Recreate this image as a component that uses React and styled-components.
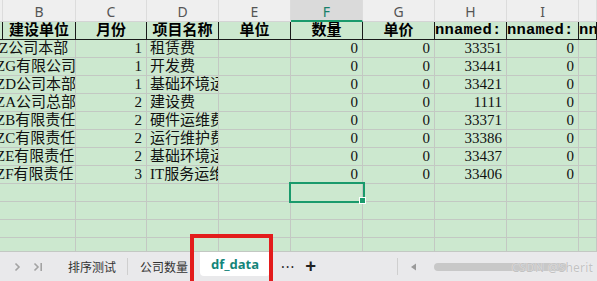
import React from "react";
import styled, { createGlobalStyle, css } from "styled-components";

const GlobalStyle = createGlobalStyle`
  html, body {
    margin: 0;
    padding: 0;
    background: #cce8cf;
  }
  #root {
    width: 597px;
    height: 281px;
    overflow: hidden;
  }
`;

const GRID_LINE = "#c3c8c3";
const SHEET_GREEN = "#cce8cf";
const ACCENT = "#1a9a6c";

const Page = styled.div`
  position: relative;
  width: 597px;
  height: 281px;
  display: flex;
  flex-direction: column;
  overflow: hidden;
  font-family: "Liberation Serif", "Noto Sans CJK SC", serif;
`;

const Sheet = styled.div`
  display: grid;
  grid-template-columns: 3px 73px 71px 72px 72px 72px 72px 72px 72px 18px;
  grid-template-rows: 22px 18px repeat(11, 18px) 14px;
  height: 252px;
  background: ${SHEET_GREEN};
  overflow: hidden;
`;

const ColHead = styled.div`
  box-sizing: border-box;
  background: ${({ $active }) => ($active ? "#dadada" : "#efefef")};
  border-right: 1px solid #dcdcdc;
  border-bottom: ${({ $active }) =>
    $active ? `2px solid ${ACCENT}` : "1px solid #d4d4d4"};
  color: ${({ $active }) => ($active ? "#17806a" : "#555")};
  font-family: "Noto Sans", sans-serif;
  font-size: 14px;
  display: flex;
  align-items: center;
  justify-content: center;
  overflow: hidden;
  padding-top: 2px;
`;

const HeadCell = styled.div`
  box-sizing: border-box;
  border-right: 1px solid #1a1a1a;
  border-bottom: 1px solid #1a1a1a;
  font-weight: bold;
  font-size: 15px;
  color: #000;
  line-height: 17px;
  white-space: nowrap;
  overflow: hidden;
  display: flex;
  align-items: center;
  justify-content: ${({ $left }) => ($left ? "flex-start" : "center")};
  ${({ $mono }) =>
    $mono &&
    css`
      font-family: "Liberation Mono", monospace;
      font-size: 15.5px;
      letter-spacing: 0.2px;
    `}
`;

const Cell = styled.div`
  position: relative;
  box-sizing: border-box;
  border-right: 1px solid ${GRID_LINE};
  border-bottom: 1px solid ${GRID_LINE};
  font-size: 15px;
  line-height: 17px;
  color: #111;
  white-space: nowrap;
  overflow: ${({ $selected }) => ($selected ? "visible" : "hidden")};
  display: flex;
  align-items: center;
  justify-content: ${({ $right }) => ($right ? "flex-end" : "flex-start")};
  padding: ${({ $right }) => ($right ? "0 4px 0 0" : "0 0 0 3px")};
  ${({ $span }) => $span && css`grid-column: span ${$span};`}
  ${({ $indent }) =>
    $indent !== undefined &&
    css`
      padding-left: 0;
      text-indent: ${$indent}px;
    `}
  ${({ $selected }) =>
    $selected &&
    css`
      z-index: 2;
      &::after {
        content: "";
        position: absolute;
        left: -2px;
        top: -2px;
        right: -3px;
        bottom: -2px;
        border: 2px solid ${ACCENT};
      }
      &::before {
        content: "";
        position: absolute;
        right: -4px;
        bottom: -3px;
        width: 5px;
        height: 5px;
        background: ${ACCENT};
        border: 1px solid #fff;
        z-index: 3;
      }
    `}
`;

const TabBar = styled.div`
  height: 29px;
  background: #e9e9eb;
  display: flex;
  align-items: center;
  font-family: "Noto Sans CJK SC", "Noto Sans", sans-serif;
  font-size: 12px;
  color: #333;
`;

const NavGroup = styled.div`
  width: 56px;
  display: flex;
  align-items: center;
  gap: 12px;
  padding-left: 14px;
  box-sizing: border-box;
  color: #a0a0a0;
`;

const Tab = styled.div`
  box-sizing: border-box;
  padding: 0 12px;
  align-self: center;
  display: flex;
  align-items: center;
  color: #333;
  font-size: 12px;
  font-family: "Noto Sans CJK SC", sans-serif;
  ${({ $active }) =>
    $active &&
    css`
      align-self: flex-start;
      height: 24px;
      padding: 0 11px;
      background: #fff;
      border-radius: 0 0 4px 4px;
      color: #13857a;
      font-weight: bold;
      font-size: 13px;
      font-family: "Noto Sans", sans-serif;
    `}
`;

const Divider = styled.div`
  width: 1px;
  height: 17px;
  background: #cfcfcf;
  margin: ${({ $m }) => $m || "0"};
`;

const Action = styled.div`
  color: #222;
  font-family: "Noto Sans", sans-serif;
  font-size: ${({ $big }) => ($big ? "19px" : "14px")};
  font-weight: ${({ $big }) => ($big ? "bold" : "normal")};
  margin-left: ${({ $ml }) => $ml}px;
  line-height: 1;
  letter-spacing: 1px;
`;

const ScrollArea = styled.div`
  display: flex;
  align-items: center;
  margin-left: 80px;
`;

const Thumb = styled.div`
  width: 133px;
  height: 8px;
  border-radius: 4px;
  background: #c8c8c8;
  margin-left: 17px;
`;

const Watermark = styled.div`
  position: absolute;
  right: 4px;
  bottom: 5px;
  font-family: "Noto Sans", sans-serif;
  font-size: 12px;
  color: #c2c2c2;
  text-shadow: 0 0 1px #fff;
  letter-spacing: 0.2px;
`;

const Highlight = styled.div`
  position: absolute;
  left: 190px;
  top: 234px;
  width: 83px;
  height: 60px;
  box-sizing: border-box;
  border: 4px solid #e31c1c;
  pointer-events: none;
`;

const letters = ["", "B", "C", "D", "E", "F", "G", "H", "I", ""];

const rows = [
  ["Z公司本部", -1, 1, "租赁费", 33351],
  ["ZG有限公司", -4, 1, "开发费", 33441],
  ["ZD公司本部", -4, 1, "基础环境运维费", 33421],
  ["ZA公司总部", -4, 2, "建设费", 1111],
  ["ZB有限责任", -4, 2, "硬件运维费", 33371],
  ["ZC有限责任", -4, 2, "运行维护费", 33386],
  ["ZE有限责任", -4, 2, "基础环境运维费", 33437],
  ["ZF有限责任", -4, 3, "IT服务运维费", 33406],
];

function ChevronRight({ bar }) {
  return (
    <svg width={bar ? 10 : 7} height="10" viewBox={bar ? "0 0 10 10" : "0 0 7 10"}>
      <path
        d="M1.5 1.5 L5 5 L1.5 8.5"
        fill="none"
        stroke="#a3a3a3"
        strokeWidth="1.6"
      />
      {bar && <path d="M8.2 1 V9" stroke="#a3a3a3" strokeWidth="1.6" />}
    </svg>
  );
}

function ArrowLeft() {
  return (
    <svg width="7" height="8" viewBox="0 0 7 8">
      <path d="M6 0.5 V7.5 L1 4 Z" fill="#9a9a9a" />
    </svg>
  );
}

export default function App() {
  return (
    <>
      <GlobalStyle />
      <Page>
        <Sheet>
          {letters.map((l, i) => (
            <ColHead key={"c" + i} $active={l === "F"}>
              {l}
            </ColHead>
          ))}

          <HeadCell />
          <HeadCell>建设单位</HeadCell>
          <HeadCell>月份</HeadCell>
          <HeadCell>项目名称</HeadCell>
          <HeadCell>单位</HeadCell>
          <HeadCell>数量</HeadCell>
          <HeadCell>单价</HeadCell>
          <HeadCell $left $mono>nnamed:</HeadCell>
          <HeadCell $left $mono>nnamed:</HeadCell>
          <HeadCell $left $mono>nnamed:</HeadCell>

          {rows.map(([unit, indent, month, item, code], r) => (
            <React.Fragment key={"r" + r}>
              <Cell $span={2} $indent={indent}>
                {unit}
              </Cell>
              <Cell $right>{month}</Cell>
              <Cell>{item}</Cell>
              <Cell />
              <Cell $right>0</Cell>
              <Cell $right>0</Cell>
              <Cell $right>{code}</Cell>
              <Cell $right>0</Cell>
              <Cell />
            </React.Fragment>
          ))}

          {[0, 1, 2, 3].map((r) =>
            letters.map((_, c) => (
              <Cell
                key={`e${r}-${c}`}
                $selected={r === 0 && c === 5}
                style={c === 0 ? { borderRight: "none" } : undefined}
              />
            ))
          )}
        </Sheet>

        <TabBar>
          <NavGroup>
            <ChevronRight />
            <ChevronRight bar />
          </NavGroup>
          <Tab>排序测试</Tab>
          <Divider $m="0 0 0 -1px" />
          <Tab>公司数量</Tab>
          <Tab $active>df_data</Tab>
          <Action $ml={11}>···</Action>
          <Action $big $ml={10}>+</Action>
          <ScrollArea>
            <Divider $m="0 12px 0 0" />
            <ArrowLeft />
            <Thumb />
          </ScrollArea>
        </TabBar>

        <Highlight />
        <Watermark>CSDN @Sherit</Watermark>
      </Page>
    </>
  );
}
